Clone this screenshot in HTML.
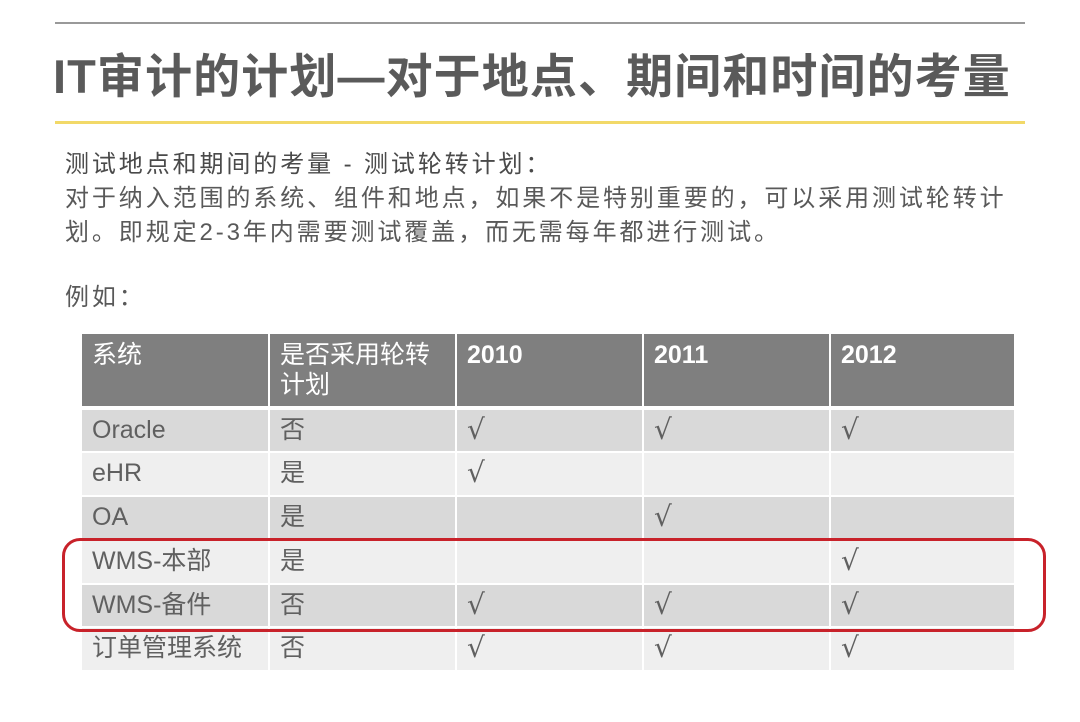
<!DOCTYPE html>
<html><head><meta charset="utf-8"><style>
body{margin:0;width:1080px;height:722px;background:#fff;position:relative;overflow:hidden;font-family:"Liberation Sans","Noto Sans CJK SC",sans-serif;color:#595959}
.a{position:absolute}
.c{position:absolute;box-sizing:border-box;padding-left:10px;font-size:25px;line-height:40px;color:#606060}
.h{background:#7f7f7f;color:#fff;font-size:25px;line-height:30px;padding-top:6px}
.y{font-weight:bold}
.ck{font-family:"DejaVu Serif","Liberation Serif",serif;font-size:28px}
</style></head><body>
<div class="a" style="left:55px;top:22px;width:970px;height:2px;background:#999"></div>
<div class="a" style="left:53px;top:47px;font-size:47px;font-weight:bold;line-height:60px;white-space:nowrap;letter-spacing:1.1px;color:#5a5a5a">IT审计的计划—对于地点、期间和时间的考量</div>
<div class="a" style="left:55px;top:121px;width:970px;height:3px;background:#f2d968"></div>
<div class="a" style="left:65px;top:148px;font-size:24px;line-height:34px;width:1000px;letter-spacing:2.9px;white-space:nowrap"><span style="color:#4a4a4a">测试地点和期间的考量 - 测试轮转计划：</span><br>对于纳入范围的系统、组件和地点，如果不是特别重要的，可以采用测试轮转计<br>划。即规定2-3年内需要测试覆盖，而无需每年都进行测试。</div>
<div class="a" style="left:65px;top:283px;font-size:24px;line-height:30px;letter-spacing:2.9px">例如：</div>
<div id="t"></div>
<script>
var cols=[82,270,457,644,831,1016];
var rows=[[410,451],[453,495],[497,539],[541,583],[585,626],[628,670]];
var data=[["Oracle","否",1,1,1],["eHR","是",1,0,0],["OA","是",0,1,0],["WMS-本部","是",0,0,1],["WMS-备件","否",1,1,1],["订单管理系统","否",1,1,1]];
var hd=["系统","是否采用轮转<br>计划","2010","2011","2012"];
var s="";
for(var j=0;j<5;j++){s+='<div class="c h'+(j>1?' y':'')+'" style="left:'+cols[j]+'px;top:334px;width:'+(cols[j+1]-cols[j]-2)+'px;height:72px">'+hd[j]+'</div>';}
for(var i=0;i<6;i++){var bg=i%2==0?"#d9d9d9":"#efefef";
for(var j=0;j<5;j++){var v=data[i][j];var txt=j<2?v:(v?'<span class="ck">√</span>':'');
s+='<div class="c" style="background:'+bg+';left:'+cols[j]+'px;top:'+rows[i][0]+'px;width:'+(cols[j+1]-cols[j]-2)+'px;height:'+(rows[i][1]-rows[i][0])+'px">'+txt+'</div>';}}
document.getElementById("t").innerHTML=s;
</script>
<div class="a" style="left:62px;top:538px;width:978px;height:88px;border:3px solid #c8222a;border-radius:18px"></div>
</body></html>
